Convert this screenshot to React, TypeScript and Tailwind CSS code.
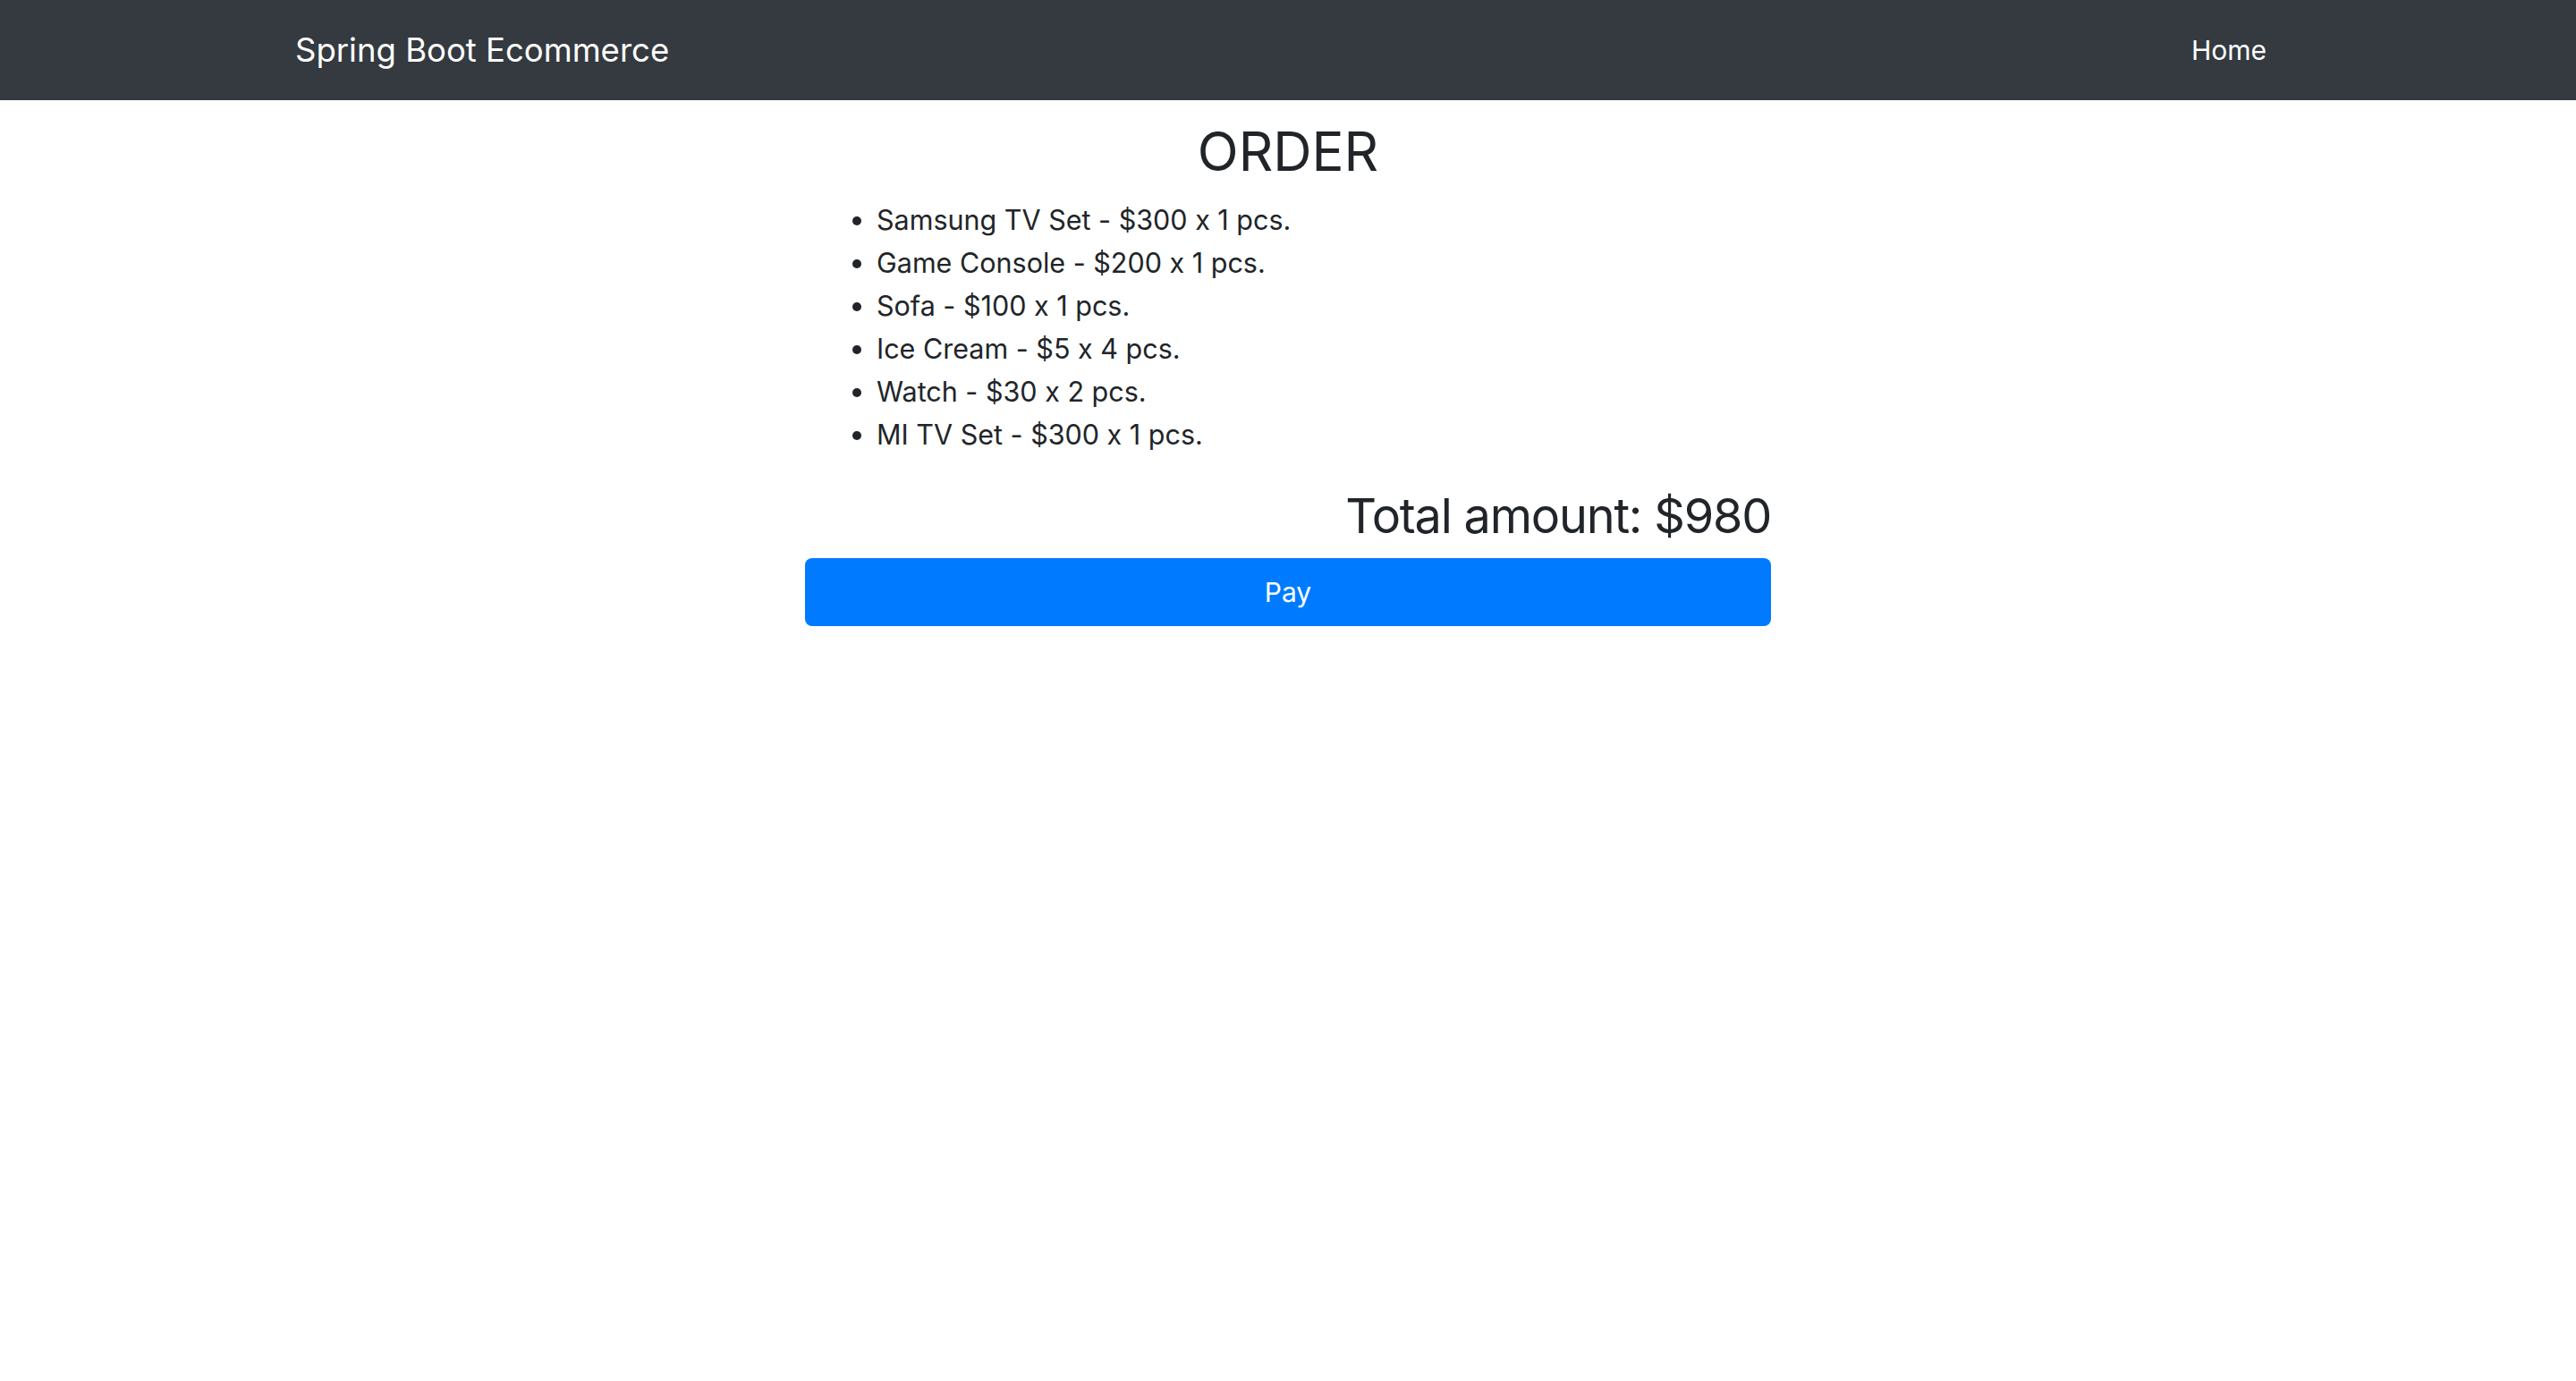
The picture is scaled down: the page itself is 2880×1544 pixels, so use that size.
const items = [
  'Samsung TV Set - $300 x 1 pcs.',
  'Game Console - $200 x 1 pcs.',
  'Sofa - $100 x 1 pcs.',
  'Ice Cream - $5 x 4 pcs.',
  'Watch - $30 x 2 pcs.',
  'MI TV Set - $300 x 1 pcs.',
];

export default function App() {
  return (
    <div className="min-h-screen bg-white text-[#212529] font-['Inter','Liberation_Sans',sans-serif] [font-feature-settings:'calt'_0]">
      <nav className="h-[112px] bg-[#343a40]">
        <div className="mx-auto flex h-full w-[2280px] items-center justify-between px-[30px]">
          <a href="#" className="text-[36.5px] leading-[60px] text-white">
            Spring Boot Ecommerce
          </a>
          <a href="#" className="px-4 text-[30px] leading-[48px] text-white">
            Home
          </a>
        </div>
      </nav>

      <main className="mx-auto w-[1080px]">
        <h3 className="mt-[21px] text-center text-[60px] leading-[72px]">ORDER</h3>
        <ul className="mt-[17px] mb-[33px] list-disc pl-[80px] text-[30.5px] leading-[48px]">
          {items.map((item) => (
            <li key={item}>{item}</li>
          ))}
        </ul>
        <h3 className="text-right text-[54px] leading-[67px] tracking-[-1.2px]">Total amount: $980</h3>
        <button className="mt-[14px] h-[76px] w-full rounded-[8px] bg-[#007bff] text-[30px] text-white">
          Pay
        </button>
      </main>
    </div>
  );
}
